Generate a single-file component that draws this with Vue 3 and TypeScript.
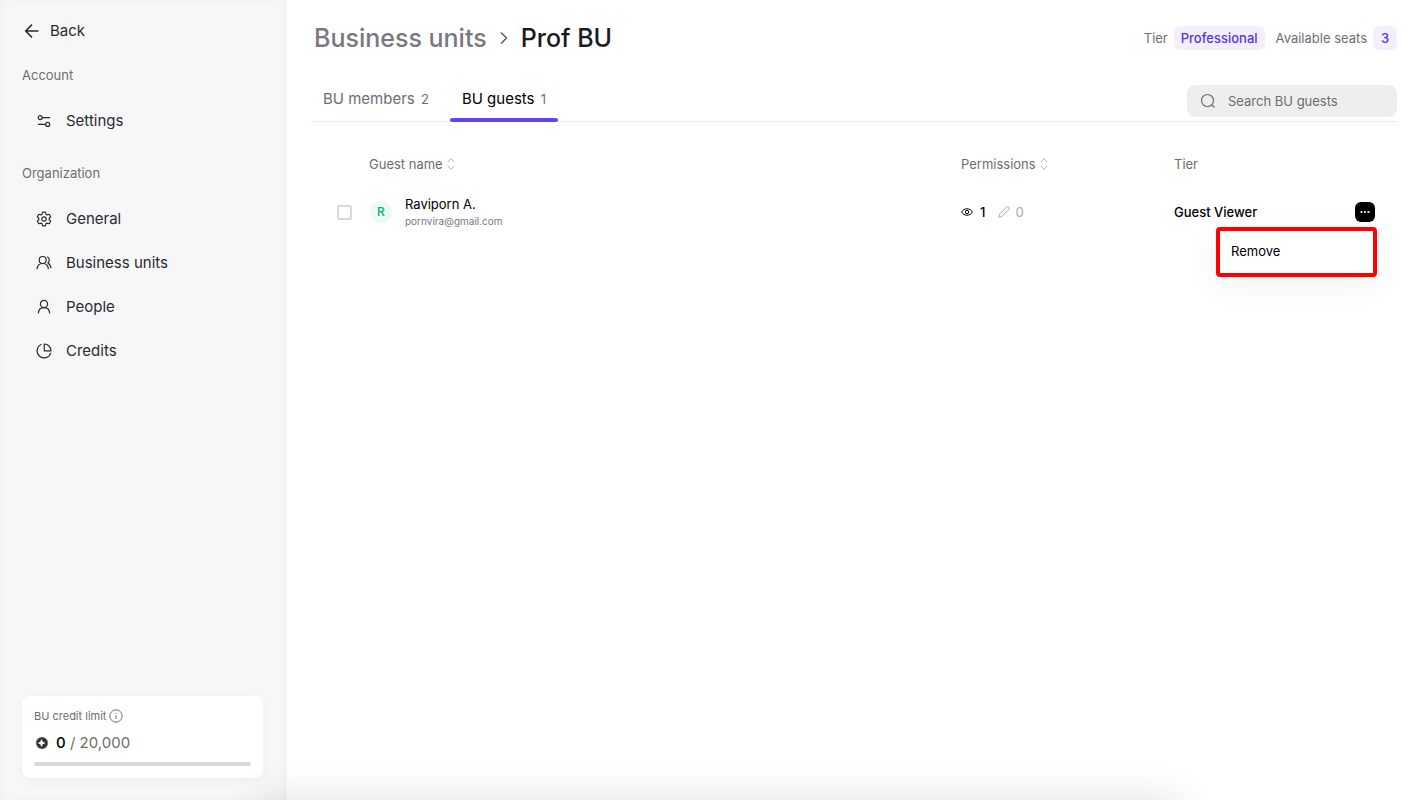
<script setup lang="ts">
import { ref } from 'vue'

interface Guest {
  id: number
  name: string
  email: string
  views: number
  edits: number
  tier: string
}

const accountItems = [{ label: 'Settings', icon: 'settings' }]
const organizationItems = [
  { label: 'General', icon: 'gear' },
  { label: 'Business units', icon: 'group' },
  { label: 'People', icon: 'person' },
  { label: 'Credits', icon: 'pie' },
]
const sections = [
  { title: 'Account', items: accountItems },
  { title: 'Organization', items: organizationItems },
]
const tabs = [
  { id: 'members', label: 'BU members', count: 2 },
  { id: 'guests', label: 'BU guests', count: 1 },
]
const guests: Guest[] = [
  { id: 1, name: 'Raviporn A.', email: 'pornvira@gmail.com', views: 1, edits: 0, tier: 'Guest Viewer' },
]

const activeTab = ref('guests')
const openMenu = ref<number | null>(1)
const selected = ref<number[]>([])
const search = ref('')

function toggleMenu(id: number) {
  openMenu.value = openMenu.value === id ? null : id
}
</script>

<template>
  <div class="app">
    <aside class="sidebar">
      <a class="back" href="#">
        <svg class="icon" viewBox="0 0 16 16"><path d="M14.5 8H2M8 1.6 1.6 8 8 14.4" stroke-width="1.5" /></svg>
        Back
      </a>
      <nav v-for="section in sections" :key="section.title" class="section" :aria-label="section.title">
        <h2 class="section-title">{{ section.title }}</h2>
        <a v-for="item in section.items" :key="item.label" class="nav-item" href="#">
          <svg v-if="item.icon === 'settings'" class="icon" viewBox="0 0 16 16">
            <circle cx="4.2" cy="4.6" r="2" /><path d="M6.2 4.6H14M2 11.4h7.6" /><circle cx="11.7" cy="11.4" r="2" />
          </svg>
          <svg v-else-if="item.icon === 'gear'" class="icon" viewBox="0 0 16 16">
            <path d="M6.6 1.2h2.8l.5 2 1.200.700 2-.600 1.600 2.600-1.500 1.400v1.400l1.500 1.400-1.600 2.600-2-.600-1.200.700-.500 2H6.600l-.500-2-1.200-.700-2 .600-1.600-2.600L2.800 8.700V7.300L1.300 5.900l1.600-2.600 2 .600 1.200-.700z" />
            <circle cx="8" cy="8" r="2.200" />
          </svg>
          <svg v-else-if="item.icon === 'group'" class="icon" viewBox="0 0 16 16">
            <circle cx="6.7" cy="5" r="3.5" />
            <path d="M1 14.2c.2-3.400 2.500-5.700 5.700-5.700s5.500 2.300 5.700 5.700M11 1.700c2.800.900 3 4.700.900 6.200 1.800 1 2.900 2.900 3.100 5.300" />
          </svg>
          <svg v-else-if="item.icon === 'person'" class="icon" viewBox="0 0 16 16">
            <circle cx="8" cy="5" r="3.6" /><path d="M2.300 14.500c.200-3.500 2.500-5.900 5.700-5.900s5.500 2.400 5.700 5.900" />
          </svg>
          <svg v-else class="icon" viewBox="0 0 16 16">
            <path d="M5.600 1.300a7 7 0 1 0 9.200 8.500M8.300 1v6.800H15A6.800 6.800 0 0 0 8.300 1z" />
          </svg>
          {{ item.label }}
        </a>
      </nav>

      <section class="credit-card">
        <div class="credit-title">
          BU credit limit
          <svg class="info" viewBox="0 0 14 14"><circle cx="7" cy="7" r="6.2" /><path d="M7 6.300v3.700M7 4v1" /></svg>
        </div>
        <div class="credit-value">
          <svg class="coin" viewBox="0 0 14 14">
            <circle cx="7" cy="7" r="6" fill="#343139" />
            <circle cx="7" cy="7" r="5.8" fill="none" stroke="#aaa8ad" stroke-width="1" stroke-dasharray="1 1" />
            <path d="M6.500 3.100 7.800 5.700 10.400 7 7.800 8.300 6.500 10.900 5.200 8.300 2.600 7l2.600-1.300z" fill="#fff" />
          </svg>
          <span><b>0</b> / 20,000</span>
        </div>
        <div class="track" role="progressbar" aria-label="BU credit limit" aria-valuenow="0" aria-valuemax="20000"></div>
      </section>
    </aside>

    <main class="main">
      <header class="header">
        <h1 class="crumbs">
          <a href="#">Business units</a>
          <svg class="chevron" viewBox="0 0 10 14"><path d="m2 1.500 5.500 5.500L2 12.500" /></svg>
          <span>Prof BU</span>
        </h1>
        <div class="plan">
          <span>Tier</span><span class="badge">Professional</span>
          <span class="seats">Available seats</span><span class="badge">3</span>
        </div>
      </header>

      <div class="toolbar">
        <div class="tabs" role="tablist">
          <button
            v-for="tab in tabs"
            :key="tab.id"
            type="button"
            role="tab"
            class="tab"
            :class="{ active: activeTab === tab.id }"
            :aria-selected="activeTab === tab.id"
            @click="activeTab = tab.id"
          >
            {{ tab.label }} <span class="count">{{ tab.count }}</span>
          </button>
        </div>
        <label class="search">
          <svg viewBox="0 0 16 16"><circle cx="7.5" cy="7.5" r="6" /><path d="m12 12 2.500 2.500" /></svg>
          <input v-model="search" type="text" placeholder="Search BU guests" aria-label="Search BU guests" />
        </label>
      </div>

      <table class="guests">
        <thead>
          <tr>
            <th class="col-check"></th>
            <th>
              <button type="button" class="sort">
                Guest name
                <svg viewBox="0 0 8 12"><path d="m.800 4 3.200-3.300L7.200 4M.800 8l3.200 3.300L7.200 8" /></svg>
              </button>
            </th>
            <th class="col-permissions">
              <button type="button" class="sort">
                Permissions
                <svg viewBox="0 0 8 12"><path d="m.800 4 3.200-3.300L7.200 4M.800 8l3.200 3.300L7.200 8" /></svg>
              </button>
            </th>
            <th class="col-tier">Tier</th>
            <th class="col-action"></th>
          </tr>
        </thead>
        <tbody>
          <tr v-for="guest in guests" :key="guest.id">
            <td class="col-check">
              <input v-model="selected" class="check" type="checkbox" :value="guest.id" :aria-label="`Select ${guest.name}`" />
            </td>
            <td>
              <div class="person">
                <span class="avatar">{{ guest.name.charAt(0) }}</span>
                <div>
                  <div class="name">{{ guest.name }}</div>
                  <div class="email">{{ guest.email }}</div>
                </div>
              </div>
            </td>
            <td>
              <div class="permissions">
                <svg class="eye" viewBox="0 0 12 12">
                  <path d="M.700 6C2.600 1.700 9.400 1.700 11.300 6 9.400 10.300 2.600 10.300.700 6z" /><circle cx="6" cy="6" r="1.7" />
                </svg>
                <span>{{ guest.views }}</span>
                <span class="edits">
                  <svg viewBox="0 0 12 12"><path d="m.800 11.200.700-3L8.800.900c1.200-.800 3.100 1 2.300 2.300L3.800 10.500z" /></svg>
                  {{ guest.edits }}
                </span>
              </div>
            </td>
            <td class="tier">{{ guest.tier }}</td>
            <td>
              <div class="actions">
                <button type="button" class="more" :aria-label="`Actions for ${guest.name}`" aria-haspopup="menu" @click="toggleMenu(guest.id)">
                  <svg viewBox="0 0 20 20"><circle cx="6.5" cy="10" r="1.1" /><circle cx="10" cy="10" r="1.1" /><circle cx="13.5" cy="10" r="1.1" /></svg>
                </button>
                <div v-if="openMenu === guest.id" class="menu" role="menu">
                  <button type="button" role="menuitem">Remove</button>
                </div>
              </div>
            </td>
          </tr>
        </tbody>
      </table>
    </main>
    <div class="bottom-shade"></div>
  </div>
</template>

<style>
body {
  margin: 0;
}
</style>

<style scoped>
.app {
  display: flex;
  min-height: 100vh;
  overflow: hidden;
  background: #fff;
  color: #000;
  font-family: Inter, "Liberation Sans", sans-serif;
  font-size: 13px;
  line-height: 20px;
}
*,
*::before,
*::after {
  box-sizing: border-box;
}
a {
  color: inherit;
  text-decoration: none;
}
button {
  padding: 0;
  border: 0;
  background: none;
  color: inherit;
  font: inherit;
  cursor: pointer;
}
svg {
  flex: none;
  fill: none;
  stroke: currentColor;
  stroke-linejoin: round;
}
.sidebar {
  display: flex;
  flex: none;
  flex-direction: column;
  width: 287px;
  padding: 20px 24px 22px 22px;
  background: #f7f7f7;
  box-shadow: inset 0 0 12px rgba(0, 0, 0, 0.03);
  color: #2b2933;
  font-size: 15px;
}
.back {
  display: flex;
  align-items: center;
  gap: 10px;
  height: 22px;
  padding-left: 2px;
}
.icon {
  width: 16px;
  height: 16px;
  stroke-width: 1.2;
}
.section {
  margin-top: 22px;
}
.section + .section {
  margin-top: 19px;
}
.section-title {
  margin: 0 0 13px;
  color: #6f6b72;
  font-size: 13px;
  font-weight: 400;
  line-height: 22px;
}
.nav-item {
  display: flex;
  align-items: center;
  gap: 14px;
  height: 44px;
  padding-left: 14px;
}
.credit-card {
  margin-top: auto;
  padding: 10px 12px 12px;
  border-radius: 8px;
  background: #fff;
  box-shadow: 0 2px 12px rgba(0, 0, 0, 0.04);
}
.credit-title,
.credit-value {
  display: flex;
  align-items: center;
  color: #6f6b72;
}
.credit-title {
  gap: 3px;
  font-size: 11px;
}
.info {
  width: 14px;
  height: 14px;
}
.credit-value {
  gap: 7px;
  margin-top: 6px;
  padding-left: 1px;
  line-height: 22px;
}
.credit-value b {
  color: #000;
  font-weight: 500;
}
.coin {
  width: 14px;
  height: 14px;
  stroke: none;
}
.track {
  height: 4px;
  margin-top: 8px;
  border-radius: 2px;
  background: #dadada;
}
.main {
  flex: 1;
  min-width: 0;
  padding: 20px 22px 20px 24px;
}
.header {
  display: flex;
  align-items: center;
  justify-content: space-between;
  height: 36px;
}
.crumbs {
  display: flex;
  align-items: center;
  margin: 0;
  padding-left: 3px;
  color: #1b1a1e;
  font-size: 25px;
  font-weight: 500;
  line-height: 36px;
}
.crumbs a {
  color: #7b777e;
}
.chevron {
  width: 10px;
  height: 14px;
  margin: 0 12px;
  color: #55525a;
  stroke-width: 1.3;
}
.plan {
  display: flex;
  align-items: center;
  color: #6f6b72;
}
.badge {
  min-width: 24px;
  margin-left: 6px;
  padding: 2px 7px;
  border-radius: 6px;
  background: #f2f0ff;
  color: #5a31e8;
  font-weight: 500;
  text-align: center;
}
.seats {
  margin-left: 11px;
}
.toolbar {
  display: flex;
  align-items: flex-end;
  justify-content: space-between;
  height: 66px;
  border-bottom: 1px solid #ebebeb;
}
.tabs {
  display: flex;
  gap: 9px;
}
.tab {
  position: relative;
  height: 44px;
  padding: 0 12px;
  color: #6f6b72;
  font-size: 15px;
}
.tab.active {
  color: #000;
}
.tab.active::after {
  position: absolute;
  right: 0;
  bottom: -1px;
  left: 0;
  height: 4px;
  border-radius: 2px;
  background: #6941f5;
  content: "";
}
.count {
  margin-left: 2px;
  color: #6f6b72;
  font-size: 13px;
}
.search {
  display: flex;
  align-items: center;
  gap: 12px;
  width: 210px;
  height: 32px;
  margin-bottom: 4px;
  padding: 0 13px;
  border-radius: 8px;
  background: #eee;
  color: #6f6b72;
}
.search svg {
  width: 16px;
  height: 16px;
  stroke-width: 1.2;
}
.search input {
  flex: 1;
  min-width: 0;
  padding: 0;
  border: 0;
  outline: 0;
  background: none;
  color: #000;
  font: inherit;
}
.search input::placeholder {
  color: #6f6b72;
  opacity: 1;
}
.guests {
  width: 100%;
  margin-top: 22px;
  border-collapse: collapse;
  table-layout: fixed;
}
th {
  height: 40px;
  padding: 0;
  color: #6f6b72;
  font-weight: 400;
  text-align: left;
}
td {
  height: 56px;
  padding: 0;
}
.col-check {
  width: 58px;
}
td.col-check {
  padding-left: 26px;
}
.col-permissions {
  width: 213px;
}
.col-tier {
  width: 143px;
}
.col-action {
  width: 80px;
}
.sort {
  display: flex;
  align-items: center;
  gap: 4px;
}
.sort svg {
  width: 8px;
  height: 12px;
  color: #b0aeb3;
}
.check {
  display: block;
  width: 15px;
  height: 15px;
  margin: 0;
  border: 2px solid #d9d9d9;
  border-radius: 2px;
  background: #fff;
  appearance: none;
}
.check:checked {
  background: #6941f5;
}
.person {
  display: flex;
  align-items: center;
  gap: 13px;
  padding-left: 1px;
}
.avatar {
  width: 22px;
  height: 22px;
  border-radius: 50%;
  background: #eafaf6;
  color: #12a884;
  font-size: 12px;
  font-weight: 500;
  line-height: 22px;
  text-align: center;
}
.name {
  line-height: 18px;
}
.email {
  color: #7b777e;
  font-size: 10px;
  line-height: 16px;
}
.permissions {
  display: flex;
  align-items: center;
  gap: 7px;
  font-weight: 500;
}
.permissions svg {
  width: 12px;
  height: 12px;
}
.edits {
  display: flex;
  align-items: center;
  gap: 5px;
  margin-left: 6px;
  color: #aaa8ad;
  font-weight: 400;
}
.tier {
  font-weight: 500;
}
.actions {
  position: relative;
  display: flex;
  justify-content: flex-end;
  padding-right: 22px;
}
.more {
  display: block;
  width: 20px;
  height: 20px;
  border-radius: 6px;
  background: #000;
  color: #fff;
}
.more svg {
  display: block;
  fill: currentColor;
  stroke: none;
}
.menu {
  position: absolute;
  top: 25px;
  right: 20px;
  width: 161px;
  height: 50px;
  border: 4px solid #f00;
  border-radius: 4px;
  background: #fff;
  box-shadow: 0 8px 32px rgba(0, 20, 20, 0.06);
}
.menu button {
  width: 100%;
  height: 40px;
  padding-left: 11px;
  text-align: left;
}
.bottom-shade {
  position: fixed;
  right: 240px;
  bottom: -40px;
  left: 260px;
  height: 40px;
  box-shadow: 0 0 40px rgba(0, 0, 0, 0.13);
  pointer-events: none;
}
</style>
